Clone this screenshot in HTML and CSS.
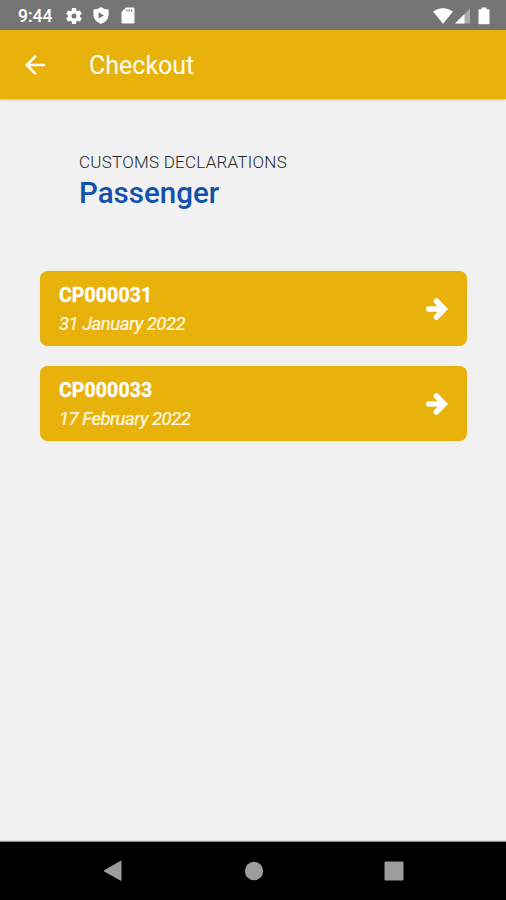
FILE: index.html
```html
<!DOCTYPE html>
<html lang="en">
<head>
<meta charset="utf-8">
<title>Checkout</title>
<link rel="stylesheet" href="styles.css">
</head>
<body>
<div class="screen">
  <div class="status">
    <span class="time">9:44</span>
    <svg class="gear" width="20" height="20" viewBox="0 0 24 24"><path d="M19.14 12.94c.04-.3.06-.61.06-.94s-.02-.64-.07-.94l2.03-1.58c.18-.14.23-.41.12-.61l-1.92-3.32c-.12-.22-.37-.29-.59-.22l-2.39.96c-.5-.38-1.03-.7-1.62-.94l-.36-2.54c-.04-.24-.24-.41-.48-.41h-3.84c-.24 0-.43.17-.47.41l-.36 2.54c-.59.24-1.13.57-1.62.94l-2.39-.96c-.22-.08-.47 0-.59.22L2.74 8.87c-.12.21-.08.47.12.61l2.03 1.58c-.05.3-.09.63-.09.94s.02.64.07.94l-2.03 1.58c-.18.14-.23.41-.12.61l1.92 3.32c.12.22.37.29.59.22l2.39-.96c.5.38 1.03.7 1.62.94l.36 2.54c.05.24.24.41.48.41h3.84c.24 0 .44-.17.47-.41l.36-2.54c.59-.24 1.13-.56 1.62-.94l2.39.96c.22.08.47 0 .59-.22l1.92-3.32c.12-.22.07-.47-.12-.61l-2.01-1.58zM12 15A3 3 0 1 1 12 9a3 3 0 0 1 0 6z"/></svg>
    <svg class="shield" width="16" height="17" viewBox="0 0 16 17"><path fill-rule="evenodd" d="M8 0Q11.500 2.500 15.600 2.500V8Q15.200 14.400 8 17Q.8 14.400.4 8V2.500Q4.500 2.500 8 0zM5.600 5.200V11.600L11 8.400z"/></svg>
    <svg class="card-icon" width="14" height="17" viewBox="0 0 14 17"><path fill-rule="evenodd" d="M5 .5H12.200Q13.500.5 13.500 1.800V15.200Q13.500 16.500 12.200 16.500H1.800Q.5 16.500.5 15.200V5zM5.200 2.600V4.600H6.400V2.600zM7.600 2.600V4.600H8.800V2.600zM10 2.600V4.600H11.200V2.600z"/></svg>
    <svg class="wifi" width="20" height="16" viewBox="0 0 20 16"><path d="M0 3.600Q10-3.600 20 3.600L10 15.800z"/></svg>
    <svg class="signal" width="15" height="16" viewBox="0 0 15 16"><path d="M0 15.500L15 .5V15.500z" opacity=".4"/><path d="M0 15.500L9.500 6V15.500z"/></svg>
    <svg class="battery" width="12" height="18" viewBox="0 0 12 18"><path d="M3.600.5H8.400V2.200H10.500Q11.500 2.200 11.500 3.200V16Q11.500 17.300 10.200 17.300H1.800Q.5 17.300.5 16V3.200Q.5 2.200 1.500 2.200H3.600z"/></svg>
  </div>
  <header class="bar">
    <svg class="back" width="30" height="30" viewBox="0 0 24 24"><path d="M20 11H7.830l5.590-5.590L12 4l-8 8 8 8 1.410-1.410L7.830 13H20v-2z"/></svg>
    <h1 class="title">Checkout</h1>
  </header>
  <main class="content">
    <div class="eyebrow">CUSTOMS DECLARATIONS</div>
    <h2 class="heading">Passenger</h2>
    <div class="list">
      <div class="item">
        <div><div class="code">CP000031</div><div class="date">31 January 2022</div></div>
        <svg class="go" width="22" height="24" viewBox="0 0 22 24"><path d="M2.700 12H17.500M10.400 4L18.200 12L10.400 20"/></svg>
      </div>
      <div class="item">
        <div><div class="code">CP000033</div><div class="date">17 February 2022</div></div>
        <svg class="go" width="22" height="24" viewBox="0 0 22 24"><path d="M2.700 12H17.500M10.400 4L18.200 12L10.400 20"/></svg>
      </div>
    </div>
  </main>
  <nav class="nav">
    <svg width="20" height="22" viewBox="0 0 20 22"><path d="M1.200 10.200L17.200 1Q18.500.4 18.500 1.500V20Q18.500 21.200 17.200 20.500L1.200 11.600Q.3 10.900 1.200 10.200z"/></svg>
    <svg width="20" height="20" viewBox="0 0 20 20"><circle cx="10" cy="10" r="9.200"/></svg>
    <svg width="20" height="20" viewBox="0 0 20 20"><rect x=".5" y=".5" width="19" height="19" rx="1.200"/></svg>
  </nav>
</div>
</body>
</html>
```

FILE: styles.css
```css
* { box-sizing: border-box; }
body { margin: 0; font-family: Roboto, sans-serif; background: #f1f1f1; }
svg { display: block; flex: none; fill: #fff; }
h1, h2 { margin: 0; }
.screen { width: 506px; height: 900px; display: flex; flex-direction: column; }
.status { height: 30px; display: flex; align-items: center; padding: 1px 16px 0 18px; background: #757575; color: #fff; }
.time { width: 46px; font-size: 17.5px; font-weight: 500; line-height: 20px; white-space: nowrap; }
.shield { margin-left: 9px; }
.card-icon { margin-left: 12px; }
.wifi { margin-left: auto; }
.signal { margin-left: 2px; }
.battery { margin-left: 8px; }
.bar { height: 69px; display: flex; align-items: center; padding: 0 20px; background: #e8b20a; box-shadow: 0 1px 2px rgba(0, 0, 0, .2); }
.title { margin-left: 39px; padding-top: 3px; color: #fffdf5; font-size: 25px; font-weight: 400; line-height: 30px; }
.content { flex: 1; padding: 52px 39px 0 40px; }
.eyebrow { margin-left: 39px; color: #23272e; font-size: 17px; font-weight: 300; letter-spacing: .25px; line-height: 22px; white-space: nowrap; }
.heading { margin-left: 39px; padding-top: 1px; color: #1352ac; font-size: 29.5px; font-weight: 500; line-height: 38px; }
.list { display: flex; flex-direction: column; gap: 20px; margin-top: 59px; }
.item { height: 75px; display: flex; align-items: center; justify-content: space-between; padding: 1px 19px 0 19px; border-radius: 8px; background: #e8b20a; color: #fff; box-shadow: 0 0 1px #e8c657; }
.code { padding-top: 1px; font-size: 19.5px; font-weight: 700; letter-spacing: .1px; line-height: 28px; -webkit-text-stroke: .3px #fff; }
.date { color: #fff8e2; font-size: 18.5px; font-style: italic; letter-spacing: -.5px; line-height: 28px; -webkit-text-stroke: .2px #fff8e2; }
.go path { fill: none; stroke: #fff; stroke-width: 5.5; stroke-linecap: round; stroke-linejoin: miter; }
.nav { height: 58px; display: flex; align-items: center; justify-content: space-between; padding: 0 102px 0 103px; background: #000; box-shadow: 0 -1px 1px #888; }
.nav svg { fill: #9c9c9c; }
```
